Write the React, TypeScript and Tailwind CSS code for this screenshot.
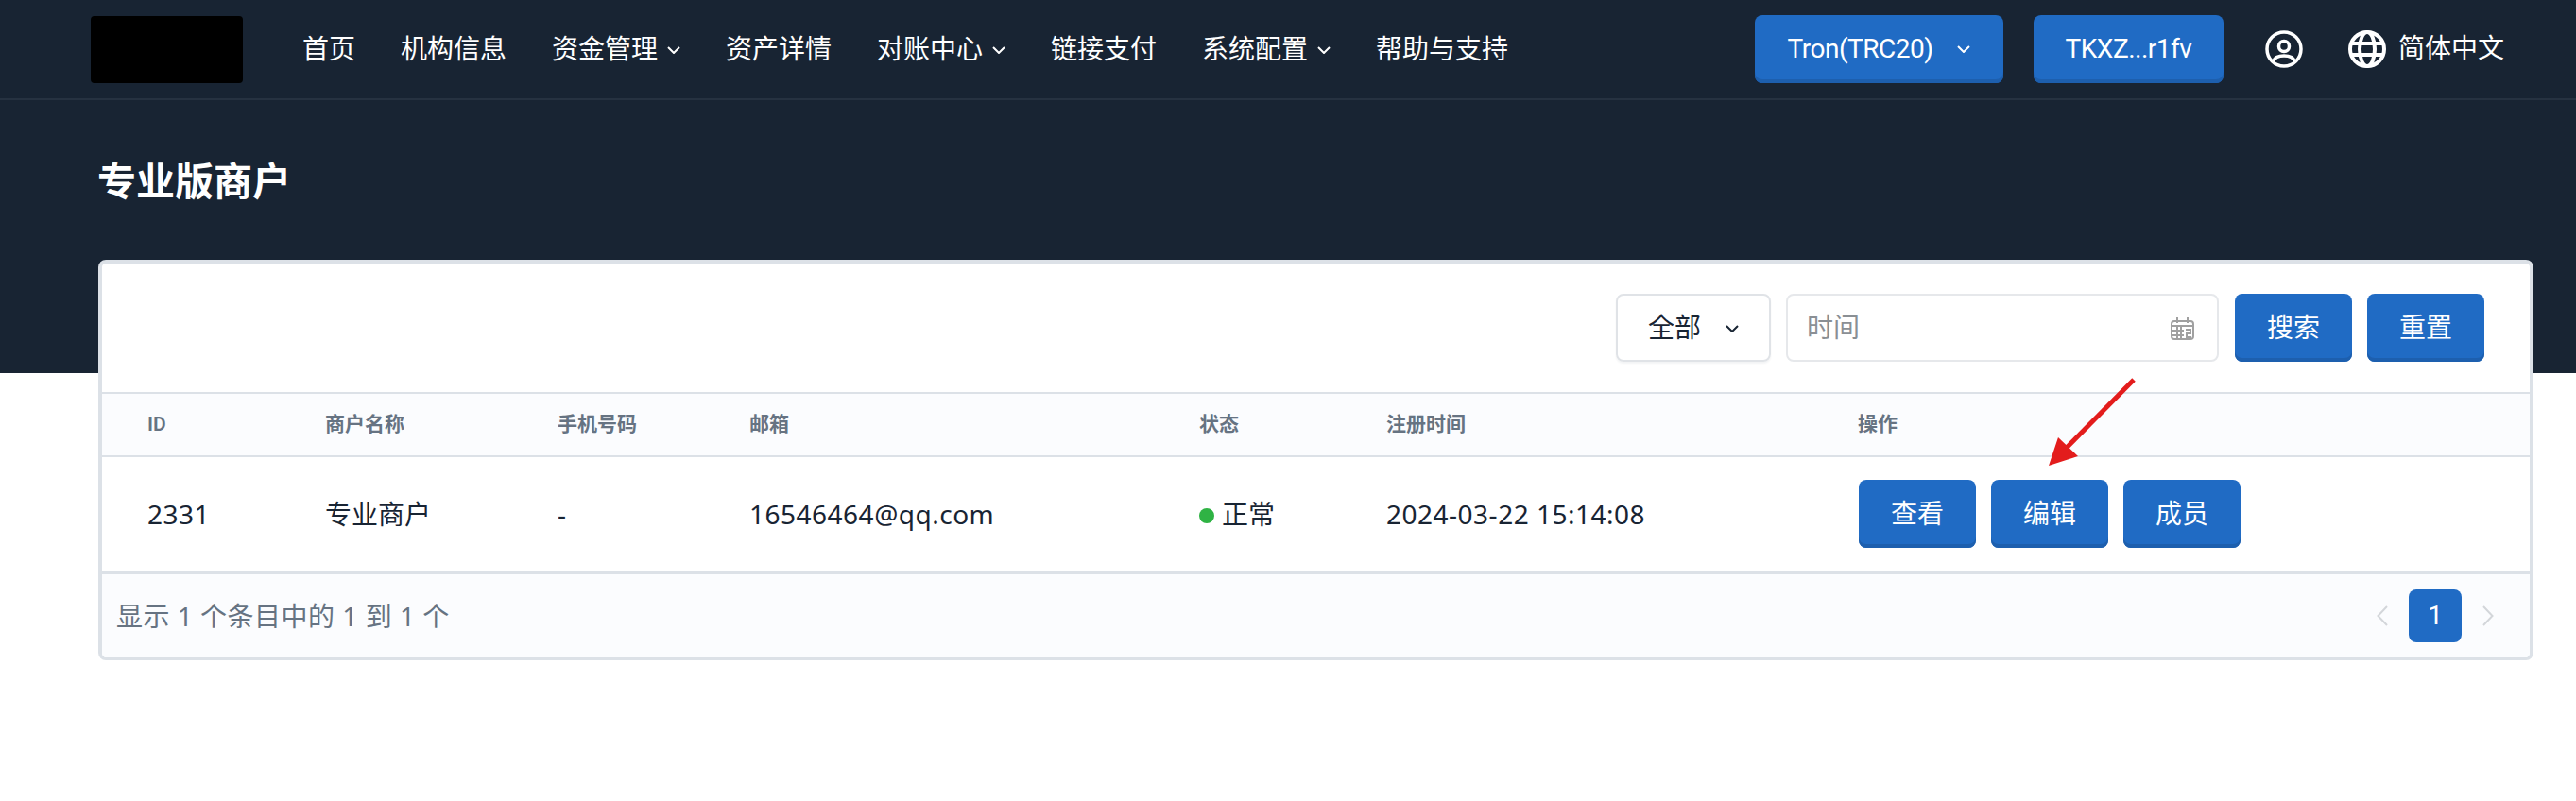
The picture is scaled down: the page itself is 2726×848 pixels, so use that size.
const navItems = [
  { label: '首页' },
  { label: '机构信息' },
  { label: '资金管理', menu: true },
  { label: '资产详情' },
  { label: '对账中心', menu: true },
  { label: '链接支付' },
  { label: '系统配置', menu: true },
  { label: '帮助与支持' },
];

const blueBtn = 'rounded-lg bg-[#206bc4] shadow-[inset_0_-4px_0_#1d5fae] text-white text-[28px] flex items-center justify-center';
const latinText = "font-['Noto_Sans','Noto_Sans_CJK_SC',sans-serif] tracking-[0.5px]";

function Caret() {
  return (
    <svg width="14" height="8" viewBox="0 0 14 8" fill="none" stroke="currentColor" strokeWidth="2">
      <path d="M1 1l6 6 6-6" />
    </svg>
  );
}

function Pager({ dir }: { dir: 'left' | 'right' }) {
  return (
    <svg width="12" height="22" viewBox="0 0 12 22" fill="none" stroke="#d3d6da" strokeWidth="2">
      <path d={dir === 'left' ? 'M11 1L1.5 11L11 21' : 'M1 1L10.5 11L1 21'} />
    </svg>
  );
}

function UserIcon() {
  return (
    <svg width="40" height="40" viewBox="0 0 40 40" fill="none" stroke="white" strokeWidth="3.5">
      <circle cx="20" cy="20" r="18" />
      <circle cx="20" cy="17" r="5.5" />
      <path d="M8.5 33C10 28.5 14 27 20 27s10 1.5 11.5 6" />
    </svg>
  );
}

function GlobeIcon() {
  return (
    <svg width="40" height="40" viewBox="0 0 40 40" fill="none" stroke="white" strokeWidth="4">
      <circle cx="20" cy="20" r="18" />
      <ellipse cx="20" cy="20" rx="8" ry="18" />
      <path d="M3 14h34M3 26h34" />
    </svg>
  );
}

function CalendarIcon() {
  return (
    <svg width="25" height="24" viewBox="0 0 25 24" fill="none" stroke="#a0a0a0" strokeWidth="2">
      <rect x="1" y="4" width="23" height="19" rx="3" />
      <path d="M1 9h23M7 0v6M18 0v6M1 14h13M1 19h13M7 10v12M11 10v12M16 13h5v4h-4v4h5" />
    </svg>
  );
}

export default function App() {
  return (
    <div className="relative min-h-[848px] bg-white font-['Roboto','Noto_Sans_CJK_SC',sans-serif]">
      <div className="h-[395px] bg-[#182433]">
        <header className="h-[106px] border-b-2 border-[#263241] flex items-center pl-[96px] pr-[76px]">
          <div className="w-[161px] h-[71px] bg-black rounded-sm mr-[63px]" />
          <nav className="flex items-center gap-[48px] text-white text-[28px]">
            {navItems.map((item) => (
              <a key={item.label} className="flex items-center gap-[10px] pt-[2px]">
                {item.label}
                {item.menu && <Caret />}
              </a>
            ))}
          </nav>
          <div className="ml-auto flex items-center">
            <button className={`${blueBtn} w-[263px] h-[72px] gap-[26px] tracking-[-0.5px]`}>
              Tron(TRC20)
              <Caret />
            </button>
            <button className={`${blueBtn} w-[201px] h-[72px] ml-[32px] tracking-[-0.5px]`}>TKXZ...r1fv</button>
            <div className="ml-[44px]"><UserIcon /></div>
            <div className="ml-[48px] flex items-center gap-[13px] text-white text-[28px]">
              <GlobeIcon />
              简体中文
            </div>
          </div>
        </header>
        <h1 className="pl-[103px] pt-[63px] text-white text-[41px] font-bold leading-[48px]">专业版商户</h1>
      </div>

      <main className="pl-[104px] pr-[45px] -mt-[120px]">
        <div className="rounded-lg border-4 border-b-[3px] border-[#dce1e7] bg-white overflow-hidden">
          <div className="h-[136px] flex items-start justify-end pt-[32px] pr-[48px] gap-[16px]">
            <div className="w-[164px] h-[72px] pt-[2px] rounded-lg border-2 border-[#e0e3e7] shadow-[0_2px_2px_rgba(24,36,51,0.05)] flex items-center justify-center gap-[26px] text-[28px] text-[#182433]">
              全部
              <Caret />
            </div>
            <div className="w-[458px] h-[72px] pt-[2px] rounded-lg border-2 border-[#e6e8eb] flex items-center justify-between pl-[20px] pr-[24px] text-[28px] text-[#8a8f94]">
              时间
              <CalendarIcon />
            </div>
            <button className={`${blueBtn} w-[124px] h-[72px] ml-[1px] pt-[2px]`}>搜索</button>
            <button className={`${blueBtn} w-[124px] h-[72px] pt-[2px]`}>重置</button>
          </div>

          <table className="w-full table-fixed border-collapse">
            <colgroup>
              <col className="w-[188px]" />
              <col className="w-[246px]" />
              <col className="w-[203px]" />
              <col className="w-[476px]" />
              <col className="w-[198px]" />
              <col className="w-[499px]" />
              <col />
            </colgroup>
            <thead>
              <tr className="h-[67px] bg-[#fbfcfe] border-y-2 border-[#dce1e7] text-left text-[21px] text-[#667382]">
                <th className="pl-[48px] font-semibold">ID</th>
                <th className="pl-[48px] font-semibold">商户名称</th>
                <th className="pl-[48px] font-semibold">手机号码</th>
                <th className="pl-[48px] font-semibold">邮箱</th>
                <th className="pl-[48px] font-semibold">状态</th>
                <th className="pl-[48px] font-semibold">注册时间</th>
                <th className="pl-[48px] font-semibold">操作</th>
              </tr>
            </thead>
            <tbody>
              <tr className="h-[121px] text-[28px] text-[#182433]">
                <td className={`pl-[48px] ${latinText}`}>2331</td>
                <td className="pl-[48px] pt-[3px]">专业商户</td>
                <td className={`pl-[48px] ${latinText}`}>-</td>
                <td className={`pl-[48px] ${latinText}`}>16546464@qq.com</td>
                <td className="pl-[48px] pt-[3px]">
                  <span className="flex items-center gap-[8px]">
                    <span className="w-[16px] h-[16px] rounded-full bg-[#2fb344]" />
                    正常
                  </span>
                </td>
                <td className={`pl-[48px] ${latinText}`}>2024-03-22 15:14:08</td>
                <td className="pl-[49px]">
                  <div className="flex gap-[16px]">
                    <button className={`${blueBtn} w-[124px] h-[72px] pt-[2px]`}>查看</button>
                    <button className={`${blueBtn} w-[124px] h-[72px] pt-[2px]`}>编辑</button>
                    <button className={`${blueBtn} w-[124px] h-[72px] pt-[2px]`}>成员</button>
                  </div>
                </td>
              </tr>
            </tbody>
          </table>

          <div className="h-[92px] bg-[#fbfcfe] border-t-4 border-[#dce1e7] flex items-center justify-between pl-[15px] pr-[38px] text-[28px] text-[#667382]">
            <span className={latinText}>显示 1 个条目中的 1 到 1 个</span>
            <div className="flex items-center gap-[22px]">
              <Pager dir="left" />
              <span className="w-[56px] h-[56px] rounded-lg bg-[#206bc4] text-white flex items-center justify-center">1</span>
              <Pager dir="right" />
            </div>
          </div>
        </div>
      </main>

      {/* annotation arrow added on the screenshot */}
      <svg className="absolute left-[2160px] top-[395px]" width="105" height="105" viewBox="0 0 105 105">
        <path d="M98 7L14 92" stroke="#e31c1c" strokeWidth="5" />
        <path d="M8 98L18 68L39 88Z" fill="#e31c1c" />
      </svg>
    </div>
  );
}
